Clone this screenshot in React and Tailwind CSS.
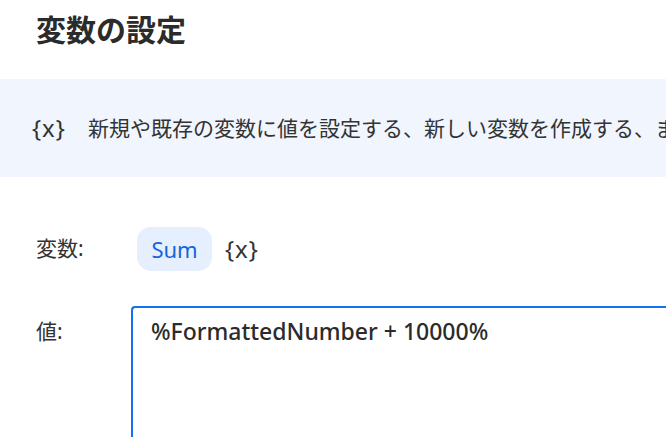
import React from 'react';

const font = { fontFamily: '"Noto Sans", "Noto Sans CJK JP", sans-serif' };

export default function App() {
  return (
    <div className="w-[666px] h-[437px] overflow-hidden bg-white text-[#333333]" style={font}>
      {/* タイトル */}
      <div className="h-[79px] pl-[36px] pt-[10px]">
        <h1 className="text-[30px] font-bold leading-[40px] text-[#2b2b2b]">変数の設定</h1>
      </div>

      {/* 説明バナー */}
      <div className="h-[98px] bg-[#f0f5fe] flex items-center pl-[32px] whitespace-nowrap overflow-hidden">
        <span className="text-[24px] leading-none mr-[22px] tracking-[1px]">{'{x}'}</span>
        <span className="text-[21px] leading-none">新規や既存の変数に値を設定する、新しい変数を作成する、ま</span>
      </div>

      {/* 変数 */}
      <div className="flex items-center pl-[36px] mt-[50px] h-[44px]">
        <span className="w-[101px] text-[21px]">変数:</span>
        <span className="h-[44px] w-[75px] rounded-[14px] bg-[#e6effd] text-[#1366e0] text-[22px] flex items-center justify-center">Sum</span>
        <span className="ml-[13px] text-[24px] tracking-[1px]">{'{x}'}</span>
      </div>

      {/* 値 */}
      <div className="flex pl-[36px] mt-[35px]">
        <span className="w-[95px] text-[21px] pt-[10px]">値:</span>
        <div className="flex-1 h-[160px] border-2 border-[#1470f0] rounded-[4px] border-r-0 rounded-r-none pl-[18px] pt-[6px]">
          <span className="text-[23px] font-medium text-[#2b2b2b]">%FormattedNumber + 10000%</span>
        </div>
      </div>
    </div>
  );
}
